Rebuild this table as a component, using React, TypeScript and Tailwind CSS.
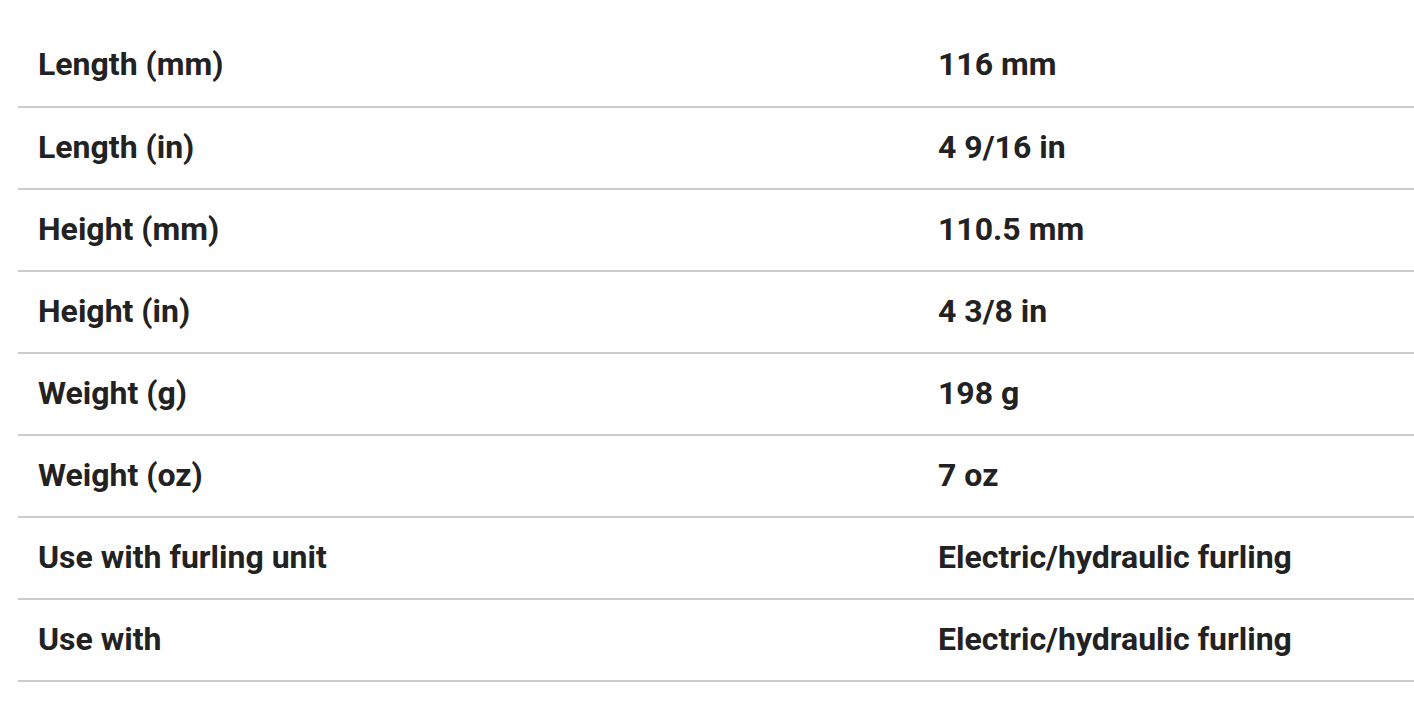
const rows = [
  ["Length (mm)", "116 mm"],
  ["Length (in)", "4 9/16 in"],
  ["Height (mm)", "110.5 mm"],
  ["Height (in)", "4 3/8 in"],
  ["Weight (g)", "198 g"],
  ["Weight (oz)", "7 oz"],
  ["Use with furling unit", "Electric/hydraulic furling"],
  ["Use with", "Electric/hydraulic furling"],
];

export default function App() {
  return (
    <div
      className="min-h-screen bg-white pt-[25px] pl-[18px]"
      style={{ fontFamily: "Roboto, 'Liberation Sans', sans-serif" }}
    >
      <table className="w-full border-collapse text-[32px] font-bold text-[#222222]">
        <tbody>
          {rows.map(([k, v], i) => (
            <tr key={i} className="h-[82px] border-b-2 border-[#cccccc]">
              <td className="w-[900px] pl-[20px] pb-[3px] align-middle">{k}</td>
              <td className="pl-[20px] pb-[3px] align-middle">{v}</td>
            </tr>
          ))}
        </tbody>
      </table>
    </div>
  );
}
